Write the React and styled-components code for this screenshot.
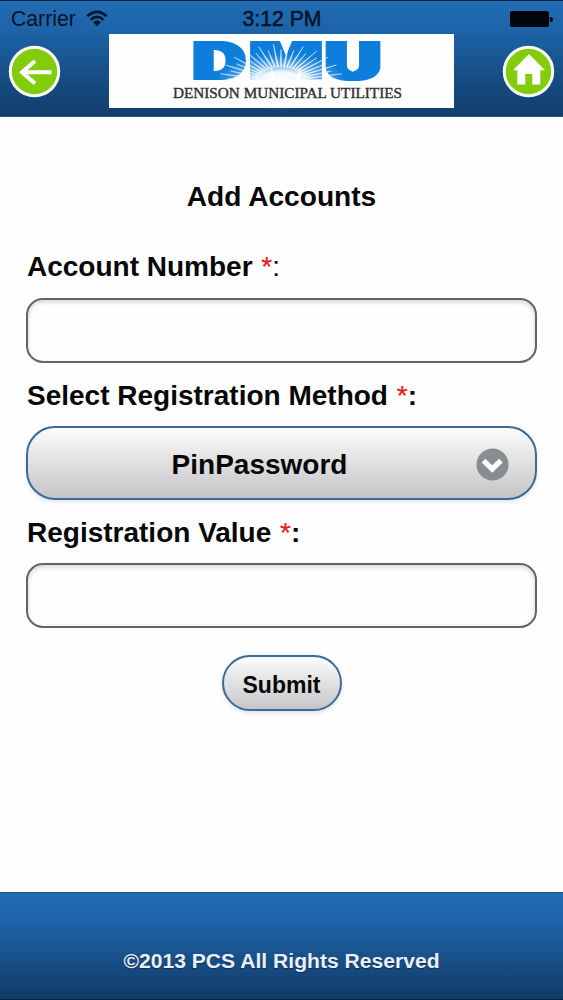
import React, { useState } from 'react'
import styled, { createGlobalStyle } from 'styled-components';

const GlobalStyle = createGlobalStyle`
  *, *::before, *::after {
    box-sizing: border-box;
  }
  body {
    margin: 0;
    background: #fefefe;
    color: #070707;
    font-family: "Liberation Sans", Arial, sans-serif;
  }
`;
const Page = styled.div`
  display: flex;
  flex-direction: column;
  height: 1000px;
  overflow: hidden;
`;
const Header = styled.header`
  height: 117px;
  border-top: 1px solid #0b2036;
  border-bottom: 1px solid #285681;
  background: linear-gradient(#216cb5 0%, #1d65aa 22%, #174e85 65%, #123e6c 100%);
`;
const StatusBar = styled.div`
  display: grid;
  grid-template-columns: 1fr auto 1fr;
  align-items: center;
  height: 33px;
  padding: 3px 10px 0 11px;
  font-size: 21.2px;
  line-height: 30px;
  color: #071426;
`;
const Carrier = styled.div`
  display: flex;
  align-items: center;
  gap: 10px;
`;
const Clock = styled.div`
  -webkit-text-stroke: 0.5px #071426;
`;
const Battery = styled.svg`
  justify-self: end;
  margin-bottom: 1px;
`;
const NavBar = styled.nav`
  display: flex;
  align-items: center;
  justify-content: space-between;
  height: 74px;
  padding: 0 8px;
`;
const RoundButton = styled.button`
  display: flex;
  width: 53px;
  height: 53px;
  padding: 0;
  border: 0;
  background: none;
`;
const Logo = styled.svg`
  display: block;
  overflow: visible;
  background: #fefefe;
`;
const Content = styled.main`
  flex: 1;
  display: flex;
  flex-direction: column;
  padding: 60px 26px 0;
`;
const Title = styled.h1`
  margin: 0 0 30px;
  font-size: 28.1px;
  line-height: 40px;
  text-align: center;
`;
const Label = styled.label`
  margin-bottom: ${props => props.$gap || 11}px;
  padding-left: 1px;
  font-size: 28px;
  font-weight: bold;
  line-height: 40px;
`;
const Required = styled.span`
  margin-left: 1px;
  color: #e51c1c;
  font-weight: normal;
  -webkit-text-stroke: 0.2px #e51c1c;
`;
const Colon = styled.span`
  font-weight: ${props => (props.$bold ? 'bold' : 'normal')};
`;
const Input = styled.input`
  width: 100%;
  height: 65px;
  margin-bottom: ${props => props.$gap}px;
  padding: 0 14px;
  border: 2px solid #656364;
  border-radius: 17px;
  background: #fefefe;
  box-shadow: inset 0 2px 5px rgba(0, 0, 0, 0.16);
  font-size: 28px;
  outline: none;
`;
const SelectButton = styled.button`
  display: flex;
  align-items: center;
  width: 100%;
  height: 74px;
  margin-bottom: 13px;
  padding: 2px 26px 0 32px;
  border: 2px solid #3b6a98;
  border-radius: 29px;
  background: linear-gradient(#fcfcfc, #c4c3c6);
  box-shadow: 0 2px 4px rgba(0, 0, 0, 0.1);
  color: #070707;
  font: bold 28px "Liberation Sans", Arial, sans-serif;
`;
const SelectText = styled.span`
  flex: 1;
  padding: 2px 17px 0 0;
  text-align: center;
`;
const SubmitButton = styled.button`
  align-self: center;
  width: 120px;
  height: 56px;
  padding: 5px 0 0;
  border: 2px solid #3b6a98;
  border-radius: 28px;
  background: linear-gradient(#fcfcfc, #c6c5c8);
  box-shadow: 0 2px 4px rgba(0, 0, 0, 0.12);
  color: #070707;
  font: bold 23px "Liberation Sans", Arial, sans-serif;
`;
const Footer = styled.footer`
  height: 108px;
  padding-top: 53px;
  border-top: 1px solid #27577f;
  border-bottom: 1px solid #0b2341;
  background: linear-gradient(#206db7 0%, #1d66ac 22%, #185088 62%, #123b67 100%);
  color: #e9f0f8;
  font-size: 21.1px;
  font-weight: bold;
  line-height: 30px;
  text-align: center;
  text-shadow: 0 1px 1px #0d2c4e;
`;

const rays = Array.from({ length: 25 }, (_, i) => {
  const angle = Math.PI * (1.03 + (i * 0.94) / 24);
  const length = i % 2 ? 1 : 0.86;
  const point = (a, rx, ry) => `${172 + Math.cos(a) * rx},${48 + Math.sin(a) * ry}`;
  return [
    point(angle - 0.035, 24, 15),
    point(angle, 62 * length, 38 * length),
    point(angle + 0.035, 24, 15),
  ].join(' ');
});

function DmuLogo() {
  return (
    <Logo width="345" height="74" viewBox="0 0 345 74">
      <defs>
        <radialGradient id="glow" cx="0" cy="0" r="1" gradientUnits="userSpaceOnUse" gradientTransform="translate(172 48) scale(64 28)">
          <stop offset="0" stopColor="#fefefe" />
          <stop offset="0.36" stopColor="#fefefe" stopOpacity="0.95" />
          <stop offset="0.6" stopColor="#fefefe" stopOpacity="0.35" />
          <stop offset="1" stopColor="#fefefe" stopOpacity="0" />
        </radialGradient>
        <filter id="widen" filterUnits="userSpaceOnUse" x="70" y="0" width="215" height="56">
          <feMorphology operator="dilate" radius="3 0" />
        </filter>
      </defs>
      <g fill="#107edb" fontFamily="Inter" fontWeight="900" fontSize="53" filter="url(#widen)">
        <text x="84" y="46" textLength="52.5" lengthAdjust="spacingAndGlyphs">D</text>
        <text x="140.5" y="46" textLength="73" lengthAdjust="spacingAndGlyphs">M</text>
        <text x="216" y="46" textLength="56" lengthAdjust="spacingAndGlyphs">U</text>
      </g>
      <ellipse cx="172" cy="48" rx="64" ry="28" fill="url(#glow)" />
      <g fill="#fefefe" stroke="#fefefe" strokeWidth="0.5" opacity="0.85">
        {rays.map(points => <polygon key={points} points={points} />)}
      </g>
      <text x="64" y="64" textLength="229" lengthAdjust="spacingAndGlyphs" fill="#303033" stroke="#303033" strokeWidth="0.4" fontFamily="Liberation Serif, serif" fontSize="15.5">
        DENISON MUNICIPAL UTILITIES
      </text>
    </Logo>
  )
}

function WifiIcon() {
  return (
    <svg width="22" height="19" viewBox="0 0 22 19" fill="none" stroke="#071426" strokeWidth="2.7">
      <path d="M1.3 6.2Q11-2.6 20.7 6.2" />
      <path d="M4.7 9.7Q11 4 17.3 9.7" />
      <path d="M11 16.2 7.2 12.2Q11 8.9 14.8 12.2Z" fill="#071426" stroke="none" />
    </svg>
  )
}

function BackIcon() {
  return (
    <svg width="53" height="53" viewBox="0 0 53 53">
      <circle cx="26.5" cy="26.5" r="24.2" fill="#82cc0b" stroke="#fafdf5" strokeWidth="3" />
      <path d="M43.5 27.3H14M27 16 14 27.3 27 38.6" fill="none" stroke="#fff" strokeWidth="4" />
    </svg>
  )
}

function HomeIcon() {
  return (
    <svg width="53" height="53" viewBox="0 0 53 53">
      <circle cx="26.5" cy="26.5" r="24.2" fill="#82cc0b" stroke="#fafdf5" strokeWidth="3" />
      <path d="M27 9 43 25.3h-4.7v14.2h-8V29h-7v10.5h-8V25.3H11Z" fill="#fff" />
    </svg>
  )
}

function App() {
  const [account, setAccount] = useState('');
  const [value, setValue] = useState('');

  return (
    <Page>
      <GlobalStyle />
      <Header>
        <StatusBar>
          <Carrier>Carrier <WifiIcon /></Carrier>
          <Clock>3:12 PM</Clock>
          <Battery width="43" height="16" viewBox="0 0 43 16" fill="#02060b">
            <rect width="39" height="16" rx="2" />
            <path d="M40 6q3 0 3 2.5T40 11Z" />
          </Battery>
        </StatusBar>
        <NavBar>
          <RoundButton aria-label="Back"><BackIcon /></RoundButton>
          <DmuLogo />
          <RoundButton aria-label="Home"><HomeIcon /></RoundButton>
        </NavBar>
      </Header>
      <Content>
        <Title>Add Accounts</Title>
        <Label htmlFor="account">Account Number <Required>*</Required><Colon>:</Colon></Label>
        <Input
          id="account"
          value={account}
          onChange={(event) => setAccount(event.target.value)}
          $gap={13}
        />
        <Label $gap={10}>Select Registration Method <Required>*</Required><Colon $bold>:</Colon></Label>
        <SelectButton>
          <SelectText>PinPassword</SelectText>
          <svg width="33" height="33" viewBox="0 0 33 33">
            <circle cx="16.5" cy="16.5" r="16" fill="#878e8f" />
            <path d="m7.5 12.6 8.7 8.4 8.7-8.4" fill="none" stroke="#fff" strokeWidth="5.4" />
          </svg>
        </SelectButton>
        <Label htmlFor="value" $gap={10}>Registration Value <Required>*</Required><Colon $bold>:</Colon></Label>
        <Input
          id="value"
          value={value}
          onChange={(event) => setValue(event.target.value)}
          $gap={27}
        />
        <SubmitButton>Submit</SubmitButton>
      </Content>
      <Footer>©2013 PCS All Rights Reserved</Footer>
    </Page>
  )
}

export default App
